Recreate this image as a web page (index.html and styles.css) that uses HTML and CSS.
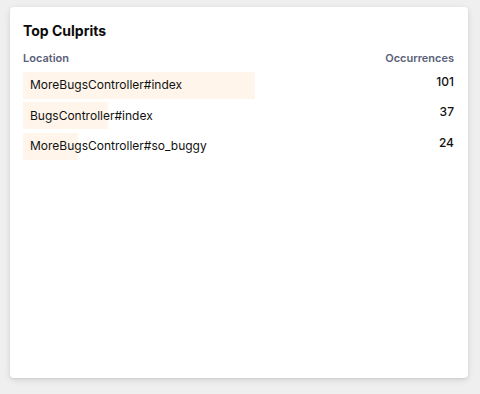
FILE: index.html
```html
<!DOCTYPE html>
<html>
<head>
<meta charset="utf-8">
<link rel="stylesheet" href="styles.css">
</head>
<body>
<div class="card">
  <h2 class="title">Top Culprits</h2>
  <div class="table">
    <div class="th">Location</div>
    <div class="th num">Occurrences</div>
    <div class="loc" style="--w: 100%">MoreBugsController#index</div>
    <div class="count">101</div>
    <div class="loc" style="--w: 36.6%">BugsController#index</div>
    <div class="count">37</div>
    <div class="loc" style="--w: 23.8%">MoreBugsController#so_buggy</div>
    <div class="count">24</div>
  </div>
</div>
</body>
</html>
```
FILE: styles.css
```css
html, body {
  margin: 0;
  padding: 0;
}
body {
  background: #efefef;
  font-family: Inter, "Noto Sans", sans-serif;
  color: #111;
  width: 480px;
  height: 394px;
  padding: 7px 12px 16px 10px;
  box-sizing: border-box;
}
.card {
  background: #fff;
  border-radius: 4px;
  height: 371px;
  box-sizing: border-box;
  padding: 14px 14px 0 13px;
  box-shadow: 0 2px 6px rgba(0, 0, 0, 0.12), 0 1px 2px rgba(0, 0, 0, 0.06);
}
.title {
  margin: 0;
  font-size: 14px;
  font-weight: 700;
  line-height: 20px;
  color: #0b0b0b;
}
.table {
  margin-top: 10px;
  display: grid;
  grid-template-columns: 232px 1fr;
  row-gap: 3.5px;
}
.th {
  font-size: 11px;
  font-weight: 600;
  color: #5a6178;
  line-height: 14px;
  margin-bottom: 3px;
}
.num {
  text-align: right;
}
.loc {
  font-size: 12px;
  line-height: 20px;
  padding: 3.5px 7px;
  white-space: nowrap;
  background: linear-gradient(to right, #fff5eb var(--w), transparent var(--w));
}
.count {
  font-size: 12px;
  font-weight: 500;
  line-height: 20px;
  text-align: right;
}
```
